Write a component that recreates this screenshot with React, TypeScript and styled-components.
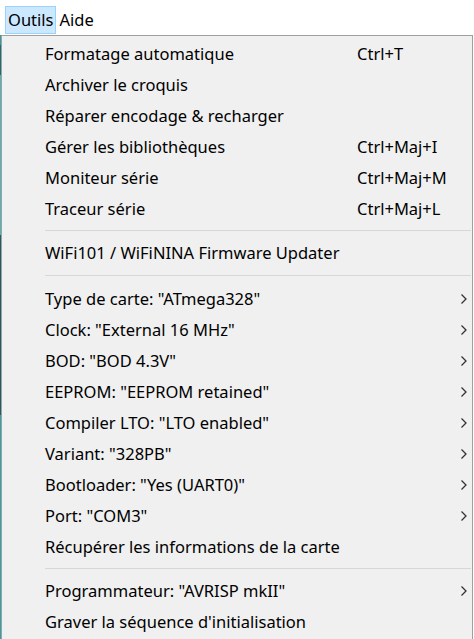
import React from "react";
import styled, { createGlobalStyle } from "styled-components";

const Global = createGlobalStyle`
  html, body { margin: 0; padding: 0; background: #ffffff; }
  body { width: 474px; height: 639px; overflow: hidden; font-family: "Noto Sans", "Open Sans", sans-serif; }
`;

const Page = styled.div`
  position: relative;
  width: 474px;
  height: 639px;
  background: #ffffff;
`;

const MenuBar = styled.div`
  display: flex;
  align-items: flex-start;
  height: 35px;
  padding-left: 5px;
  background: #ffffff;
`;

const BarItem = styled.div<{ $active?: boolean }>`
  height: 28px;
  box-sizing: border-box;
  display: flex;
  align-items: center;
  padding: 0 2px 1px 2px;
  font-size: 16.5px;
  color: #000;
  border: 1px solid ${(p) => (p.$active ? "#99d1ff" : "transparent")};
  background: ${(p) => (p.$active ? "#cce8ff" : "transparent")};
  margin-top: 6px;
`;

const Backdrop = styled.div`
  position: absolute;
  left: 0;
  top: 35px;
  width: 1px;
  height: 604px;
  background: linear-gradient(
    #2e9ea1 0px, #2e9ea1 10px, #1b6f73 10px, #1b6f73 40px, #4cb7ba 40px, #4cb7ba 200px,
    #1f5f62 200px, #1f5f62 380px, #2ea4a8 380px
  );
`;

const Dropdown = styled.div`
  position: absolute;
  left: 1px;
  top: 35px;
  width: 472px;
  height: 610px;
  background: #f0f0f0;
  border: 1px solid #a0a0a0;
  padding: 2px 0 0 2px;
  box-sizing: border-box;
  display: flex;
  flex-direction: column;
`;

const Item = styled.div`
  display: grid;
  grid-template-columns: 41px 1fr 103px 12px;
  align-items: center;
  height: 31px;
  font-size: 16.5px;
  color: #000;
  white-space: nowrap;
`;

const Label = styled.span`
  grid-column: 2;
`;

const Shortcut = styled.span`
  grid-column: 3;
`;

const Arrow = styled.span`
  grid-column: 4;
  display: flex;
  align-items: center;
`;

const Separator = styled.div<{ $h?: number }>`
  height: ${(p) => p.$h ?? 13}px;
  display: flex;
  align-items: center;
  padding-left: 41px;
  &::after {
    content: "";
    display: block;
    height: 1px;
    width: 100%;
    background: #d7d7d7;
    margin-right: 1px;
  }
`;

const Chevron = () => (
  <svg width="8" height="12" viewBox="0 0 8 12">
    <path d="M1.5 1.5 L6 6 L1.5 10.5" fill="none" stroke="#333" strokeWidth="1.3" />
  </svg>
);

type Entry = { label: string; shortcut?: string; sub?: boolean } | "sep" | "sep2";

const entries: Entry[] = [
  { label: "Formatage automatique", shortcut: "Ctrl+T" },
  { label: "Archiver le croquis" },
  { label: "Réparer encodage & recharger" },
  { label: "Gérer les bibliothèques", shortcut: "Ctrl+Maj+I" },
  { label: "Moniteur série", shortcut: "Ctrl+Maj+M" },
  { label: "Traceur série", shortcut: "Ctrl+Maj+L" },
  "sep",
  { label: "WiFi101 / WiFiNINA Firmware Updater" },
  "sep2",
  { label: 'Type de carte: "ATmega328"', sub: true },
  { label: 'Clock: "External 16 MHz"', sub: true },
  { label: 'BOD: "BOD 4.3V"', sub: true },
  { label: 'EEPROM: "EEPROM retained"', sub: true },
  { label: 'Compiler LTO: "LTO enabled"', sub: true },
  { label: 'Variant: "328PB"', sub: true },
  { label: 'Bootloader: "Yes (UART0)"', sub: true },
  { label: 'Port: "COM3"', sub: true },
  { label: "Récupérer les informations de la carte" },
  "sep",
  { label: 'Programmateur: "AVRISP mkII"', sub: true },
  { label: "Graver la séquence d'initialisation" },
];

export default function App() {
  return (
    <Page>
      <Global />
      <MenuBar>
        <BarItem $active>Outils</BarItem>
        <BarItem>Aide</BarItem>
      </MenuBar>
      <Backdrop />
      <Dropdown>
        {entries.map((e, i) =>
          e === "sep" ? (
            <Separator key={i} $h={13} />
          ) : e === "sep2" ? (
            <Separator key={i} $h={15} />
          ) : (
            <Item key={i}>
              <Label>{e.label}</Label>
              {e.shortcut && <Shortcut>{e.shortcut}</Shortcut>}
              {e.sub && (
                <Arrow>
                  <Chevron />
                </Arrow>
              )}
            </Item>
          )
        )}
      </Dropdown>
    </Page>
  );
}
